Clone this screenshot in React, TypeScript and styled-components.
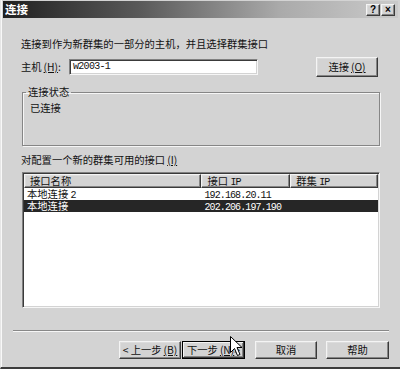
import React from 'react';
import styled, { createGlobalStyle } from 'styled-components';

const GlobalStyle = createGlobalStyle`
  html, body {
    margin: 0;
    padding: 0;
    background: #d3d3d3;
  }
  body {
    font-family: "Noto Sans CJK SC", "Liberation Sans", sans-serif;
    font-size: 10.3px;
    color: #111;
  }
`;

const raised = `
  background: #d3d3d3;
  border: 1px solid;
  border-color: #f4f4f4 #3a3a3a #3a3a3a #f4f4f4;
  box-shadow: inset -1px -1px #858585, inset 1px 1px #dcdcdc;
`;

const Window = styled.div`
    position: relative;
    box-sizing: border-box;
    width: 400px;
    height: 369px;
    display: flex;
    flex-direction: column;
    padding: 1px 2px 2px 2px;
    border-left: 1px solid #e6e6e6;
    border-bottom: 2px solid #3c3c3c;
    box-shadow: inset 1px 0 #f8f8f8;
  `,
  TitleBar = styled.div`
    height: 17px;
    display: flex;
    align-items: center;
    padding: 0 3px 0 2px;
    background: linear-gradient(to right, #202020 0%, #5a5a5a 35%, #aaaaaa 70%, #cacaca 100%);
  `,
  Title = styled.span`
    color: #fff;
    font-weight: bold;
    font-size: 11.5px;
    line-height: 17px;
    flex: 1;
  `,
  TitleButton = styled.div`
    ${raised}
    box-sizing: border-box;
    width: 14px;
    height: 12px;
    margin-left: 1px;
    font-family: "Liberation Sans", sans-serif;
    font-weight: bold;
    font-size: 10px;
    line-height: 10px;
    text-align: center;
    color: #000;
  `,
  Content = styled.div`
    display: flex;
    flex-direction: column;
    padding: 0 18px;
  `,
  Intro = styled.div`
    margin-top: 19px;
    line-height: 14px;
    height: 14px;
  `,
  HostRow = styled.div`
    margin-top: 6px;
    height: 20px;
    display: flex;
    align-items: center;
  `,
  FieldLabel = styled.span`
    width: 48px;
    line-height: 14px;
  `,
  TextBox = styled.div`
    box-sizing: border-box;
    width: 189px;
    height: 16px;
    background: #fff;
    border: 1px solid;
    border-color: #808080 #f6f6f6 #f6f6f6 #808080;
    box-shadow: inset 1px 1px #3a3a3a, inset -1px -1px #d3d3d3;
    padding: 0 3px;
    font-family: "Liberation Mono", monospace;
    font-size: 10px;
    letter-spacing: -0.7px;
    line-height: 14px;
  `,
  Key = styled.span`
    margin-left: 2px;
    text-decoration: underline;
  `,
  Button = styled.div<{ focused?: boolean; wide?: boolean; gapAfter?: number }>`
    ${raised}
    box-sizing: border-box;
    width: ${(p) => (p.focused || p.wide ? 63 : 62)}px;
    height: 18px;
    margin-right: ${(p) => p.gapAfter ?? 0}px;
    display: flex;
    align-items: center;
    justify-content: center;
    line-height: 14px;
    white-space: nowrap;
    ${(p) =>
      p.focused
        ? `
      border: 1px solid #000;
      box-shadow: inset -1px -1px #3a3a3a, inset 1px 1px #f4f4f4, inset -2px -2px #858585;
    `
        : ''}
  `,
  ConnectButton = styled(Button)`
    height: 20px;
    margin-left: auto;
    margin-right: 2px;
  `,
  GroupBox = styled.fieldset`
    margin: 8px 0 0 1px;
    width: 358px;
    height: 61px;
    box-sizing: border-box;
    padding: 2px 7px 0;
    border: 1px solid #868686;
    box-shadow: inset 1px 1px #f6f6f6, 1px 1px #f6f6f6;
  `,
  Legend = styled.legend`
    margin-left: -4px;
    padding: 0 2px;
    line-height: 14px;
  `,
  StatusText = styled.div`
    line-height: 14px;
  `,
  ListLabel = styled.div`
    margin-top: 7px;
    line-height: 14px;
  `,
  ListView = styled.div`
    margin: 5px 0 0 1px;
    box-sizing: border-box;
    width: 358px;
    height: 136px;
    background: #fff;
    border: 1px solid;
    border-color: #808080 #f6f6f6 #f6f6f6 #808080;
    box-shadow: inset 1px 1px #3a3a3a, inset -1px -1px #d3d3d3;
    padding: 1px;
  `,
  HeaderRow = styled.div`
    display: flex;
    height: 14px;
  `,
  HeaderCell = styled.div<{ w: number }>`
    ${raised}
    box-sizing: border-box;
    width: ${(p) => p.w}px;
    padding-left: 5px;
    line-height: 12px;
    white-space: nowrap;
  `,
  Row = styled.div<{ selected?: boolean }>`
    display: flex;
    height: 12px;
    line-height: 12px;
    background: ${(p) => (p.selected ? '#262626' : 'transparent')};
    color: ${(p) => (p.selected ? '#fff' : '#111')};
  `,
  Cell = styled.div<{ w: number }>`
    width: ${(p) => p.w}px;
    height: 12px;
    padding-left: 3px;
    box-sizing: border-box;
    white-space: nowrap;
  `,
  Mono = styled.span`
    font-family: "Liberation Mono", monospace;
    font-size: 10px;
    letter-spacing: -0.9px;
  `,
  Footer = styled.div`
    display: flex;
    flex-direction: column;
    padding: 0 9px 0 10px;
  `,
  Separator = styled.div`
    margin-top: 22px;
    height: 1px;
    background: #888;
    border-bottom: 1px solid #f6f6f6;
  `,
  ButtonRow = styled.div`
    margin-top: 9px;
    display: flex;
    justify-content: flex-end;
  `,
  ButtonGroup = styled.div`
    display: flex;
    gap: 1px;
    margin-right: 10px;
  `,
  Cursor = styled.svg`
    position: absolute;
    left: 229px;
    top: 336px;
  `;

const cols = [178, 89, 88];

export default function App() {
  return (
    <>
      <GlobalStyle />
      <Window>
        <TitleBar>
          <Title>连接</Title>
          <TitleButton>?</TitleButton>
          <TitleButton>×</TitleButton>
        </TitleBar>
        <Content>
          <Intro>连接到作为新群集的一部分的主机，并且选择群集接口</Intro>
          <HostRow>
            <FieldLabel>
              主机<Key>(H)</Key>:
            </FieldLabel>
            <TextBox>w2003-1</TextBox>
            <ConnectButton>
              连接<Key>(O)</Key>
            </ConnectButton>
          </HostRow>
          <GroupBox>
            <Legend>连接状态</Legend>
            <StatusText>已连接</StatusText>
          </GroupBox>
          <ListLabel>
            对配置一个新的群集可用的接口<Key>(I)</Key>
          </ListLabel>
          <ListView>
            <HeaderRow>
              <HeaderCell w={cols[0]}>接口名称</HeaderCell>
              <HeaderCell w={cols[1]}>
                接口 <Mono>IP</Mono>
              </HeaderCell>
              <HeaderCell w={cols[2]}>
                群集 <Mono>IP</Mono>
              </HeaderCell>
            </HeaderRow>
            <Row>
              <Cell w={cols[0]}>
                本地连接 <Mono>2</Mono>
              </Cell>
              <Cell w={cols[1]}>
                <Mono>192.168.20.11</Mono>
              </Cell>
              <Cell w={cols[2]} />
            </Row>
            <Row selected>
              <Cell w={cols[0]}>本地连接</Cell>
              <Cell w={cols[1]}>
                <Mono>202.206.197.190</Mono>
              </Cell>
              <Cell w={cols[2]} />
            </Row>
          </ListView>
        </Content>
        <Footer>
          <Separator />
          <ButtonRow>
            <ButtonGroup>
              <Button>
                &lt; 上一步<Key>(B)</Key>
              </Button>
              <Button focused>
                下一步<Key>(N)</Key> &gt;
              </Button>
            </ButtonGroup>
            <Button gapAfter={9}>取消</Button>
            <Button wide>帮助</Button>
          </ButtonRow>
        </Footer>
        <Cursor width="13" height="21" viewBox="0 0 13 21">
          <path d="M0.5 0.5 L0.5 16.5 L4.5 12.5 L7.5 19.5 L10 18.5 L7 11.5 L12 11.5 Z" fill="#fff" stroke="#000" strokeWidth="1" />
        </Cursor>
      </Window>
    </>
  );
}
